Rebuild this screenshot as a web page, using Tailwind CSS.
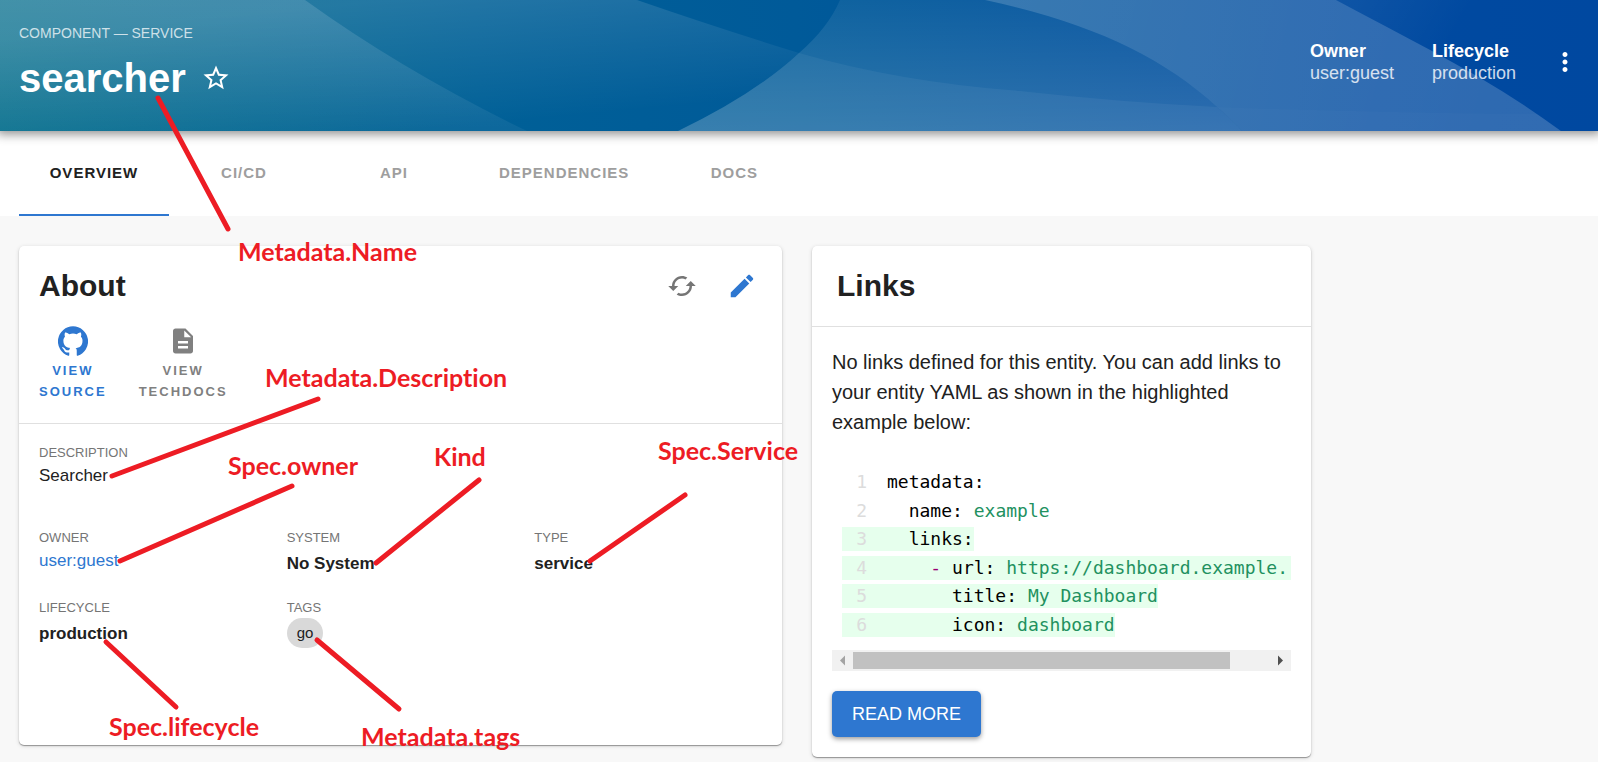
<!DOCTYPE html>
<html lang="en">
<head>
<meta charset="utf-8">
<title>searcher</title>
<script src="https://cdn.jsdelivr.net/npm/@tailwindcss/browser@4"></script>
</head>
<body class="relative min-h-screen overflow-x-hidden bg-[#f8f8f8] font-['Liberation_Sans',Arial,sans-serif] text-[#212121]">

<header class="relative z-10 flex h-[131px] items-center bg-[#00569c] pr-[18px] pb-2 pl-[19px] text-white shadow-[0_0_10px_3px_rgba(0,0,0,0.45)]">
  <svg class="absolute inset-0 h-full w-full" viewBox="0 0 1598 131" preserveAspectRatio="none" aria-hidden="true">
    <defs>
      <linearGradient id="base" gradientUnits="userSpaceOnUse" x1="0" y1="131" x2="1598" y2="0"><stop offset="0" stop-color="#006b8a"/><stop offset=".3" stop-color="#006097"/><stop offset=".5" stop-color="#005a99"/><stop offset=".85" stop-color="#004aa0"/><stop offset="1" stop-color="#0048a0"/></linearGradient>
      <linearGradient id="down" x1="0" x2="0" y1="0" y2="1"><stop offset="0" stop-color="#fff" stop-opacity=".14"/><stop offset="1" stop-color="#fff" stop-opacity=".05"/></linearGradient>
      <linearGradient id="fade" gradientUnits="userSpaceOnUse" x1="400" y1="0" x2="412" y2="131"><stop offset="0" stop-color="#fff" stop-opacity=".14"/><stop offset="1" stop-color="#fff" stop-opacity="0"/></linearGradient>
      <linearGradient id="up" x1="0" x2="0" y1="0" y2="1"><stop offset="0" stop-color="#fff" stop-opacity=".06"/><stop offset="1" stop-color="#fff" stop-opacity=".18"/></linearGradient>
      <linearGradient id="right" gradientUnits="userSpaceOnUse" x1="1000" y1="0" x2="1500" y2="131"><stop offset="0" stop-color="#fff" stop-opacity=".22"/><stop offset="1" stop-color="#fff" stop-opacity=".18"/></linearGradient>
      <linearGradient id="corner" gradientUnits="userSpaceOnUse" x1="1336" y1="0" x2="1440" y2="60"><stop offset="0" stop-color="#fff" stop-opacity=".06"/><stop offset="1" stop-color="#fff" stop-opacity="0"/></linearGradient>
    </defs>
    <rect width="1598" height="131" fill="url(#base)"/>
    <path d="M0 0H305Q405 72 527 131H0Z" fill="url(#down)"/>
    <path d="M0 0H637Q715 27 799 53Q755 94 678 131H0Z" fill="url(#fade)"/>
    <path d="M840 0Q828 28 799 53Q755 94 678 131H1242Q1233 121 1217 107C1160 55 1090 23 985 0Z" fill="url(#up)"/>
    <path d="M799 53Q900 82 1020 91Q1120 102 1217 107Q1233 121 1242 131H678Q755 94 799 53Z" fill="#fff" fill-opacity=".05"/>
    <path d="M985 0H1336C1410 40 1490 78 1561 131H1242Q1233 121 1217 107C1160 55 1090 23 985 0Z" fill="url(#right)"/>
    <path d="M1217 107Q1380 113 1538 114L1561 131H1242Z" fill="#fff" fill-opacity=".015"/>
    <path d="M1336 0H1598V131H1561C1490 78 1410 40 1336 0Z" fill="url(#corner)"/>
  </svg>
  <div class="relative grow">
    <p class="text-[14px] leading-5 text-white/75">COMPONENT — SERVICE</p>
    <div class="mt-3 flex items-center gap-[15px]">
      <h1 class="text-[40px] leading-[46px] font-bold">searcher</h1>
      <button type="button" aria-label="Add to favorites" class="size-[30px]"><svg viewBox="0 0 24 24" class="size-[30px]" fill="currentColor"><path d="M22 9.24l-7.19-.62L12 2 9.19 8.63 2 9.24l5.46 4.73L5.82 21 12 17.27 18.18 21l-1.63-7.03L22 9.24zM12 15.4l-3.76 2.27 1-4.28-3.32-2.88 4.38-.38L12 6.1l1.71 4.04 4.38.38-3.32 2.88 1 4.28L12 15.4z"/></svg></button>
    </div>
  </div>
  <dl class="relative flex gap-[38px] text-[18px] leading-[22px]">
    <div><dt class="font-bold">Owner</dt><dd class="text-white/80">user:guest</dd></div>
    <div><dt class="font-bold">Lifecycle</dt><dd class="text-white/80">production</dd></div>
  </dl>
  <button type="button" aria-label="More" class="relative ml-[34px] size-[30px]"><svg viewBox="0 0 24 24" class="size-[30px]" fill="currentColor"><path d="M12 8c1.1 0 2-.9 2-2s-.9-2-2-2-2 .9-2 2 .9 2 2 2zm0 2c-1.1 0-2 .9-2 2s.9 2 2 2 2-.9 2-2-.9-2-2-2zm0 6c-1.1 0-2 .9-2 2s.9 2 2 2 2-.9 2-2-.9-2-2-2z"/></svg></button>
</header>

<nav class="flex h-[85px] bg-white px-[19px] text-[15px] font-bold tracking-[1px] text-[#9e9e9e]">
  <a href="#overview" class="flex min-w-[150px] items-center justify-center border-b-2 border-[#2e77d0] px-[30px] pt-[2px] text-[#212121]">OVERVIEW</a>
  <a href="#cicd" class="flex min-w-[150px] items-center justify-center border-b-2 border-transparent px-[30px] pt-[2px]">CI/CD</a>
  <a href="#api" class="flex min-w-[150px] items-center justify-center border-b-2 border-transparent px-[30px] pt-[2px]">API</a>
  <a href="#dependencies" class="flex min-w-[150px] items-center justify-center border-b-2 border-transparent px-[30px] pt-[2px]">DEPENDENCIES</a>
  <a href="#docs" class="flex min-w-[150px] items-center justify-center border-b-2 border-transparent px-[30px] pt-[2px]">DOCS</a>
</nav>

<main class="grid grid-cols-12 items-start gap-[30px] pt-[30px] pr-[23px] pl-[19px]">
  <section class="col-span-6 min-h-[499px] rounded-[5px] bg-white shadow-[0_1px_1px_rgba(0,0,0,0.35),0_1px_4px_rgba(0,0,0,0.15)]">
    <div class="border-b border-[#e0e0e0] px-5 pt-5 pb-[21px]">
      <div class="flex items-center justify-between">
        <h2 class="text-[30px] leading-10 font-bold">About</h2>
        <div class="flex gap-[30px] pr-[5px]">
          <button type="button" aria-label="Refresh" class="size-[30px] text-[#757575]"><svg viewBox="0 0 24 24" class="size-[30px]" fill="currentColor"><path d="M19 8l-4 4h3c0 3.31-2.69 6-6 6-1.01 0-1.97-.25-2.8-.7l-1.46 1.46C8.97 19.54 10.43 20 12 20c4.42 0 8-3.58 8-8h3l-4-4zM6 12c0-3.31 2.69-6 6-6 1.01 0 1.97.25 2.8.7l1.46-1.46C15.03 4.46 13.57 4 12 4c-4.42 0-8 3.58-8 8H1l4 4 4-4H6z"/></svg></button>
          <a href="#edit" aria-label="Edit" class="size-[30px] text-[#2e77d0]"><svg viewBox="0 0 24 24" class="size-[30px]" fill="currentColor"><path d="M3 17.25V21h3.75L17.81 9.94l-3.75-3.75L3 17.25zM20.71 7.04c.39-.39.39-1.02 0-1.41l-2.34-2.34c-.39-.39-1.02-.39-1.41 0l-1.83 1.83 3.75 3.75 1.83-1.83z"/></svg></a>
        </div>
      </div>
      <div class="mt-5 flex gap-8 text-center text-[13px] leading-[21px] font-bold tracking-[2px]">
        <a href="#source" class="flex flex-col items-center text-[#2e77d0]"><svg viewBox="0 0 24 24" class="size-[30px]" fill="currentColor"><path d="M12 .3a12 12 0 0 0-3.8 23.4c.6.1.8-.3.8-.6v-2c-3.3.7-4-1.6-4-1.6-.6-1.4-1.4-1.8-1.4-1.8-1-.7.1-.7.1-.7 1.2 0 1.9 1.2 1.9 1.2 1 1.8 2.8 1.3 3.5 1 0-.8.4-1.3.7-1.6-2.7-.3-5.500-1.3-5.500-6 0-1.2.5-2.3 1.3-3.1-.2-.4-.6-1.6 0-3.2 0 0 1-.3 3.4 1.2a11.500 11.500 0 0 1 6 0c2.3-1.5 3.3-1.2 3.3-1.2.6 1.6.2 2.8 0 3.2.9.8 1.3 1.9 1.3 3.2 0 4.6-2.8 5.6-5.500 5.9.5.4.9 1 .9 2.2v3.3c0 .3.1.7.8.6A12 12 0 0 0 12 .3"/></svg><span class="mt-1">VIEW<br>SOURCE</span></a>
        <a href="#techdocs" class="flex flex-col items-center text-[#808080]"><svg viewBox="0 0 24 24" class="size-[30px]" fill="currentColor"><path d="M14 2H6c-1.1 0-1.99.9-1.99 2L4 20c0 1.1.89 2 1.99 2H18c1.1 0 2-.9 2-2V8l-6-6zm2 16H8v-2h8v2zm0-4H8v-2h8v2zm-3-5V3.5L18.500 9H13z"/></svg><span class="mt-1">VIEW<br>TECHDOCS</span></a>
      </div>
    </div>
    <dl class="grid grid-cols-3 gap-x-5 px-5 pt-[18px] text-[17px] leading-[25px]">
      <div class="col-span-3 h-[85px]"><dt class="text-[13px] leading-[21px] text-[#757575]">DESCRIPTION</dt><dd>Searcher</dd></div>
      <div class="h-[70px]"><dt class="text-[13px] leading-[21px] text-[#757575]">OWNER</dt><dd><a href="#guest" class="text-[#2e77d0]">user:guest</a></dd></div>
      <div><dt class="text-[13px] leading-[21px] text-[#757575]">SYSTEM</dt><dd class="pt-[3px] font-bold">No System</dd></div>
      <div><dt class="text-[13px] leading-[21px] text-[#757575]">TYPE</dt><dd class="pt-[3px] font-bold">service</dd></div>
      <div><dt class="text-[13px] leading-[21px] text-[#757575]">LIFECYCLE</dt><dd class="pt-[3px] font-bold">production</dd></div>
      <div><dt class="text-[13px] leading-[21px] text-[#757575]">TAGS</dt><dd><span class="inline-block rounded-full bg-[#d9d9d9] px-[10px] text-[15px] leading-[30px]">go</span></dd></div>
    </dl>
  </section>

  <section class="col-span-4 rounded-[5px] bg-white shadow-[0_1px_1px_rgba(0,0,0,0.35),0_1px_4px_rgba(0,0,0,0.15)]">
    <h2 class="border-b border-[#e0e0e0] px-[25px] py-5 text-[30px] leading-10 font-bold">Links</h2>
    <div class="p-5">
      <p class="text-[20px] leading-[30px]">No links defined for this entity. You can add links to your entity YAML as shown in the highlighted example below:</p>
      <div class="mt-[33px] flex h-[167px] flex-col items-start justify-between overflow-hidden pl-[10px] text-[18px] leading-6 whitespace-pre text-black">
        <code class="flex font-['DejaVu_Sans_Mono',monospace]"><span class="w-[45px] pr-5 text-right text-[#dcdcdc]">1</span><span>metadata:</span></code>
        <code class="flex font-['DejaVu_Sans_Mono',monospace]"><span class="w-[45px] pr-5 text-right text-[#dcdcdc]">2</span><span>  name: <span class="text-[#22915f]">example</span></span></code>
        <code class="flex bg-[#e6ffed] font-['DejaVu_Sans_Mono',monospace]"><span class="w-[45px] pr-5 text-right text-[#dcdcdc]">3</span><span>  links:</span></code>
        <code class="flex self-stretch bg-[#e6ffed] font-['DejaVu_Sans_Mono',monospace]"><span class="w-[45px] pr-5 text-right text-[#dcdcdc]">4</span><span>    <span class="text-[#990073]">-</span> url: <span class="text-[#22915f]">https://dashboard.example.</span></span></code>
        <code class="flex bg-[#e6ffed] font-['DejaVu_Sans_Mono',monospace]"><span class="w-[45px] pr-5 text-right text-[#dcdcdc]">5</span><span>      title: <span class="text-[#22915f]">My Dashboard</span></span></code>
        <code class="flex bg-[#e6ffed] font-['DejaVu_Sans_Mono',monospace]"><span class="w-[45px] pr-5 text-right text-[#dcdcdc]">6</span><span>      icon: <span class="text-[#22915f]">dashboard</span></span></code>
      </div>
      <div class="mt-[13px] flex h-[21px] items-center bg-[#f1f1f1]">
        <svg viewBox="0 0 21 21" class="size-[21px]" fill="#a3a3a3"><path d="M13 5.500v10L8 10.500z"/></svg>
        <div class="h-[17px] grow bg-[#c1c1c1]"></div>
        <svg viewBox="0 0 21 21" class="ml-10 size-[21px]" fill="#505050"><path d="M8 5.500v10l5-5z"/></svg>
      </div>
      <a href="#more" class="mt-5 inline-block rounded-[5px] bg-[#2e77d0] px-5 text-[18px] leading-[46px] text-white shadow-[0_2px_5px_rgba(0,0,0,0.4)]">READ MORE</a>
    </div>
  </section>
</main>

<!-- Annotations pointing from fields to their YAML keys -->
<svg class="pointer-events-none absolute top-0 left-0 z-20 h-[762px] w-[820px] font-['Lato',sans-serif] text-[25px] font-bold [font-variant-ligatures:none]" fill="#ed1c24">
  <g stroke="#ed1c24" stroke-width="5" stroke-linecap="round">
    <path d="M158 98L228 229"/><path d="M112 476L318 399"/><path d="M120 561L292 486"/><path d="M376 563L479 480"/><path d="M590 561L685 495"/><path d="M106 642L176 707"/><path d="M317 640L399 709"/>
  </g>
  <text x="238" y="261">Metadata.Name</text>
  <text x="265" y="387">Metadata.Description</text>
  <text x="228" y="475">Spec.owner</text>
  <text x="434" y="466">Kind</text>
  <text x="658" y="460">Spec.Service</text>
  <text x="109" y="736">Spec.lifecycle</text>
  <text x="361" y="746">Metadata.tags</text>
</svg>
</body>
</html>
